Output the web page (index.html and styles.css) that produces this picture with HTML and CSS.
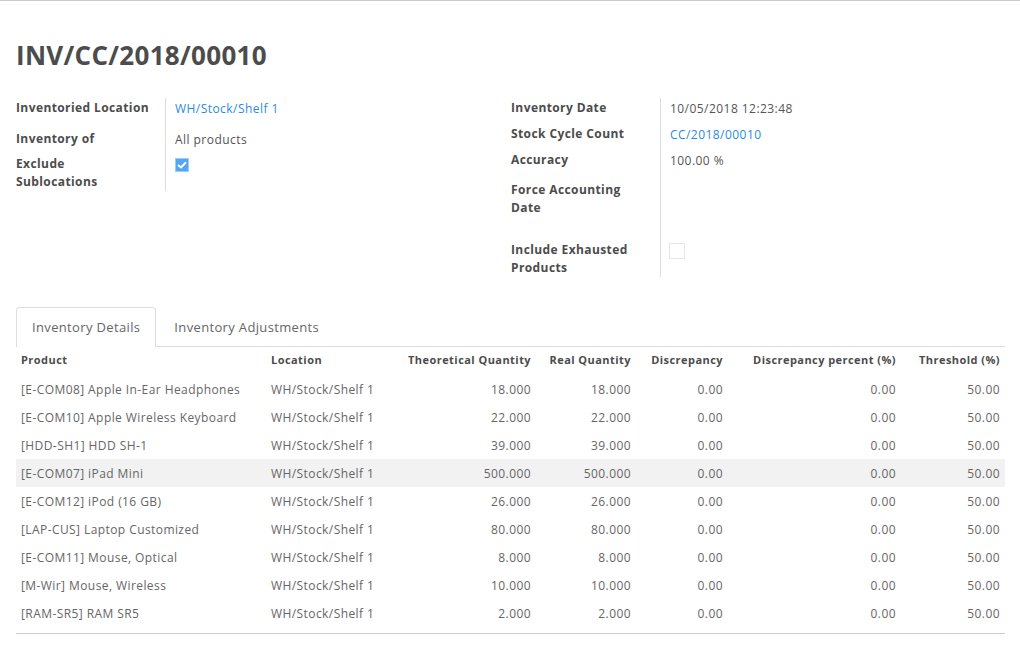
FILE: index.html
```html
<!DOCTYPE html>
<html>
<head>
<meta charset="utf-8">
<link rel="stylesheet" href="styles.css">
</head>
<body>
<div class="sheet">
  <h1 class="title">INV/CC/2018/00010</h1>
  <div class="groups">
    <div class="group group-left">
      <div class="row r-31"><div class="lbl">Inventoried Location</div><div class="val"><a class="link">WH/Stock/Shelf 1</a></div></div>
      <div class="row r-25"><div class="lbl">Inventory of</div><div class="val">All products</div></div>
      <div class="row r-37"><div class="lbl">Exclude<br>Sublocations</div><div class="val"><span class="cb checked"><svg width="10" height="8" viewBox="0 0 10 8"><path d="M1 4 L4 6.5 L9 1.2" fill="none" stroke="#fff" stroke-width="2"/></svg></span></div></div>
    </div>
    <div class="group group-right">
      <div class="row r-26"><div class="lbl">Inventory Date</div><div class="val">10/05/2018 12:23:48</div></div>
      <div class="row r-26"><div class="lbl">Stock Cycle Count</div><div class="val"><a class="link">CC/2018/00010</a></div></div>
      <div class="row r-30"><div class="lbl">Accuracy</div><div class="val">100.00 %</div></div>
      <div class="row r-60"><div class="lbl">Force Accounting<br>Date</div><div class="val"></div></div>
      <div class="row r-37"><div class="lbl">Include Exhausted<br>Products</div><div class="val"><span class="cb empty"></span></div></div>
    </div>
  </div>

  <div class="tabs">
    <div class="tab active">Inventory Details</div>
    <div class="tab">Inventory Adjustments</div>
  </div>

  <table class="lines">
    <colgroup>
      <col style="width:250px"><col style="width:137px"><col style="width:133px"><col style="width:100px"><col style="width:92px"><col style="width:173px"><col style="width:104px">
    </colgroup>
    <thead>
      <tr><th>Product</th><th>Location</th><th class="num">Theoretical Quantity</th><th class="num">Real Quantity</th><th class="num">Discrepancy</th><th class="num">Discrepancy percent (%)</th><th class="num">Threshold (%)</th></tr>
    </thead>
    <tbody>
      <tr><td>[E-COM08] Apple In-Ear Headphones</td><td>WH/Stock/Shelf 1</td><td class="num">18.000</td><td class="num">18.000</td><td class="num">0.00</td><td class="num">0.00</td><td class="num">50.00</td></tr>
      <tr><td>[E-COM10] Apple Wireless Keyboard</td><td>WH/Stock/Shelf 1</td><td class="num">22.000</td><td class="num">22.000</td><td class="num">0.00</td><td class="num">0.00</td><td class="num">50.00</td></tr>
      <tr><td>[HDD-SH1] HDD SH-1</td><td>WH/Stock/Shelf 1</td><td class="num">39.000</td><td class="num">39.000</td><td class="num">0.00</td><td class="num">0.00</td><td class="num">50.00</td></tr>
      <tr class="hover"><td>[E-COM07] iPad Mini</td><td>WH/Stock/Shelf 1</td><td class="num">500.000</td><td class="num">500.000</td><td class="num">0.00</td><td class="num">0.00</td><td class="num">50.00</td></tr>
      <tr><td>[E-COM12] iPod (16 GB)</td><td>WH/Stock/Shelf 1</td><td class="num">26.000</td><td class="num">26.000</td><td class="num">0.00</td><td class="num">0.00</td><td class="num">50.00</td></tr>
      <tr><td>[LAP-CUS] Laptop Customized</td><td>WH/Stock/Shelf 1</td><td class="num">80.000</td><td class="num">80.000</td><td class="num">0.00</td><td class="num">0.00</td><td class="num">50.00</td></tr>
      <tr><td>[E-COM11] Mouse, Optical</td><td>WH/Stock/Shelf 1</td><td class="num">8.000</td><td class="num">8.000</td><td class="num">0.00</td><td class="num">0.00</td><td class="num">50.00</td></tr>
      <tr><td>[M-Wir] Mouse, Wireless</td><td>WH/Stock/Shelf 1</td><td class="num">10.000</td><td class="num">10.000</td><td class="num">0.00</td><td class="num">0.00</td><td class="num">50.00</td></tr>
      <tr><td>[RAM-SR5] RAM SR5</td><td>WH/Stock/Shelf 1</td><td class="num">2.000</td><td class="num">2.000</td><td class="num">0.00</td><td class="num">0.00</td><td class="num">50.00</td></tr>
    </tbody>
    <tfoot>
      <tr class="spacer"><td colspan="7"></td></tr>
    </tfoot>
  </table>
</div>
</body>
</html>
```
FILE: styles.css
```css
html, body {
  margin: 0;
  padding: 0;
  background: #fff;
}
body {
  font-family: "Open Sans", "Liberation Sans", sans-serif;
  font-size: 12px;
  color: #555;
  border-top: 1px solid #c9c8d3;
  height: 656px;
  overflow: hidden;
}
.sheet {
  padding: 0 15px 0 16px;
}
.title {
  margin: 0;
  padding-top: 39px;
  height: 58px;
  font-size: 26px;
  line-height: 30px;
  font-weight: bold;
  letter-spacing: 0.3px;
  color: #4c4c4c;
}
.groups {
  display: flex;
}
.group-left {
  width: 495px;
}
.group-right {
  flex: 1;
}
.row {
  display: flex;
}
.r-25 { height: 25px; }
.r-26 { height: 26px; }
.r-30 { height: 30px; }
.r-31 { height: 31px; }
.r-37 { height: 37px; }
.r-60 { height: 60px; }
.lbl {
  width: 150px;
  flex: none;
  border-right: 1px solid #ddd;
  font-weight: bold;
  font-size: 12px;
  line-height: 18px;
  letter-spacing: 0.4px;
  padding-top: 1px;
  box-sizing: border-box;
  color: #4c4c4c;
}
.val {
  padding-left: 9px;
  padding-top: 2px;
  line-height: 18px;
  font-size: 12px;
  letter-spacing: 0.45px;
  color: #555;
}
.link {
  color: #2a8be0;
  text-decoration: none;
}
.cb {
  display: inline-flex;
  align-items: center;
  justify-content: center;
  box-sizing: border-box;
}
.cb.checked {
  width: 14px;
  height: 14px;
  margin-top: 2px;
  background: #53a6f3;
  border: 1px solid #9fcbf5;
}
.cb.empty {
  width: 16px;
  height: 16px;
  margin-top: 1px;
  margin-left: -1px;
  border: 1px solid #e6e6e6;
}
.tabs {
  display: flex;
  margin-top: 30px;
  border-bottom: 1px solid #ddd;
  height: 39px;
}
.tab {
  padding: 0 15px 0 15px;
  height: 39px;
  line-height: 38px;
  font-size: 13px;
  letter-spacing: 0.35px;
  color: #666;
  border: 1px solid transparent;
  border-bottom: none;
  border-radius: 4px 4px 0 0;
  box-sizing: border-box;
}
.tab.active {
  border-color: #ddd;
  background: #fff;
  height: 40px;
}
.tab + .tab {
  padding-left: 17px;
}
.lines {
  width: 989px;
  table-layout: fixed;
  border-collapse: collapse;
  border-bottom: 1px solid #ccc;
}
.lines th, .lines td {
  padding: 0 5px;
  height: 28px;
  white-space: nowrap;
  overflow: hidden;
  text-align: left;
}
.lines th {
  font-weight: bold;
  font-size: 11px;
  letter-spacing: 0.45px;
  color: #4c4c4c;
  line-height: 26px;
  vertical-align: top;
}
.lines td {
  color: #666;
  letter-spacing: 0.42px;
}
.lines .num {
  text-align: right;
}
.lines tr.hover td {
  background: #f2f2f2;
}
.lines tr.spacer td {
  height: 6px;
  padding: 0;
}
```
